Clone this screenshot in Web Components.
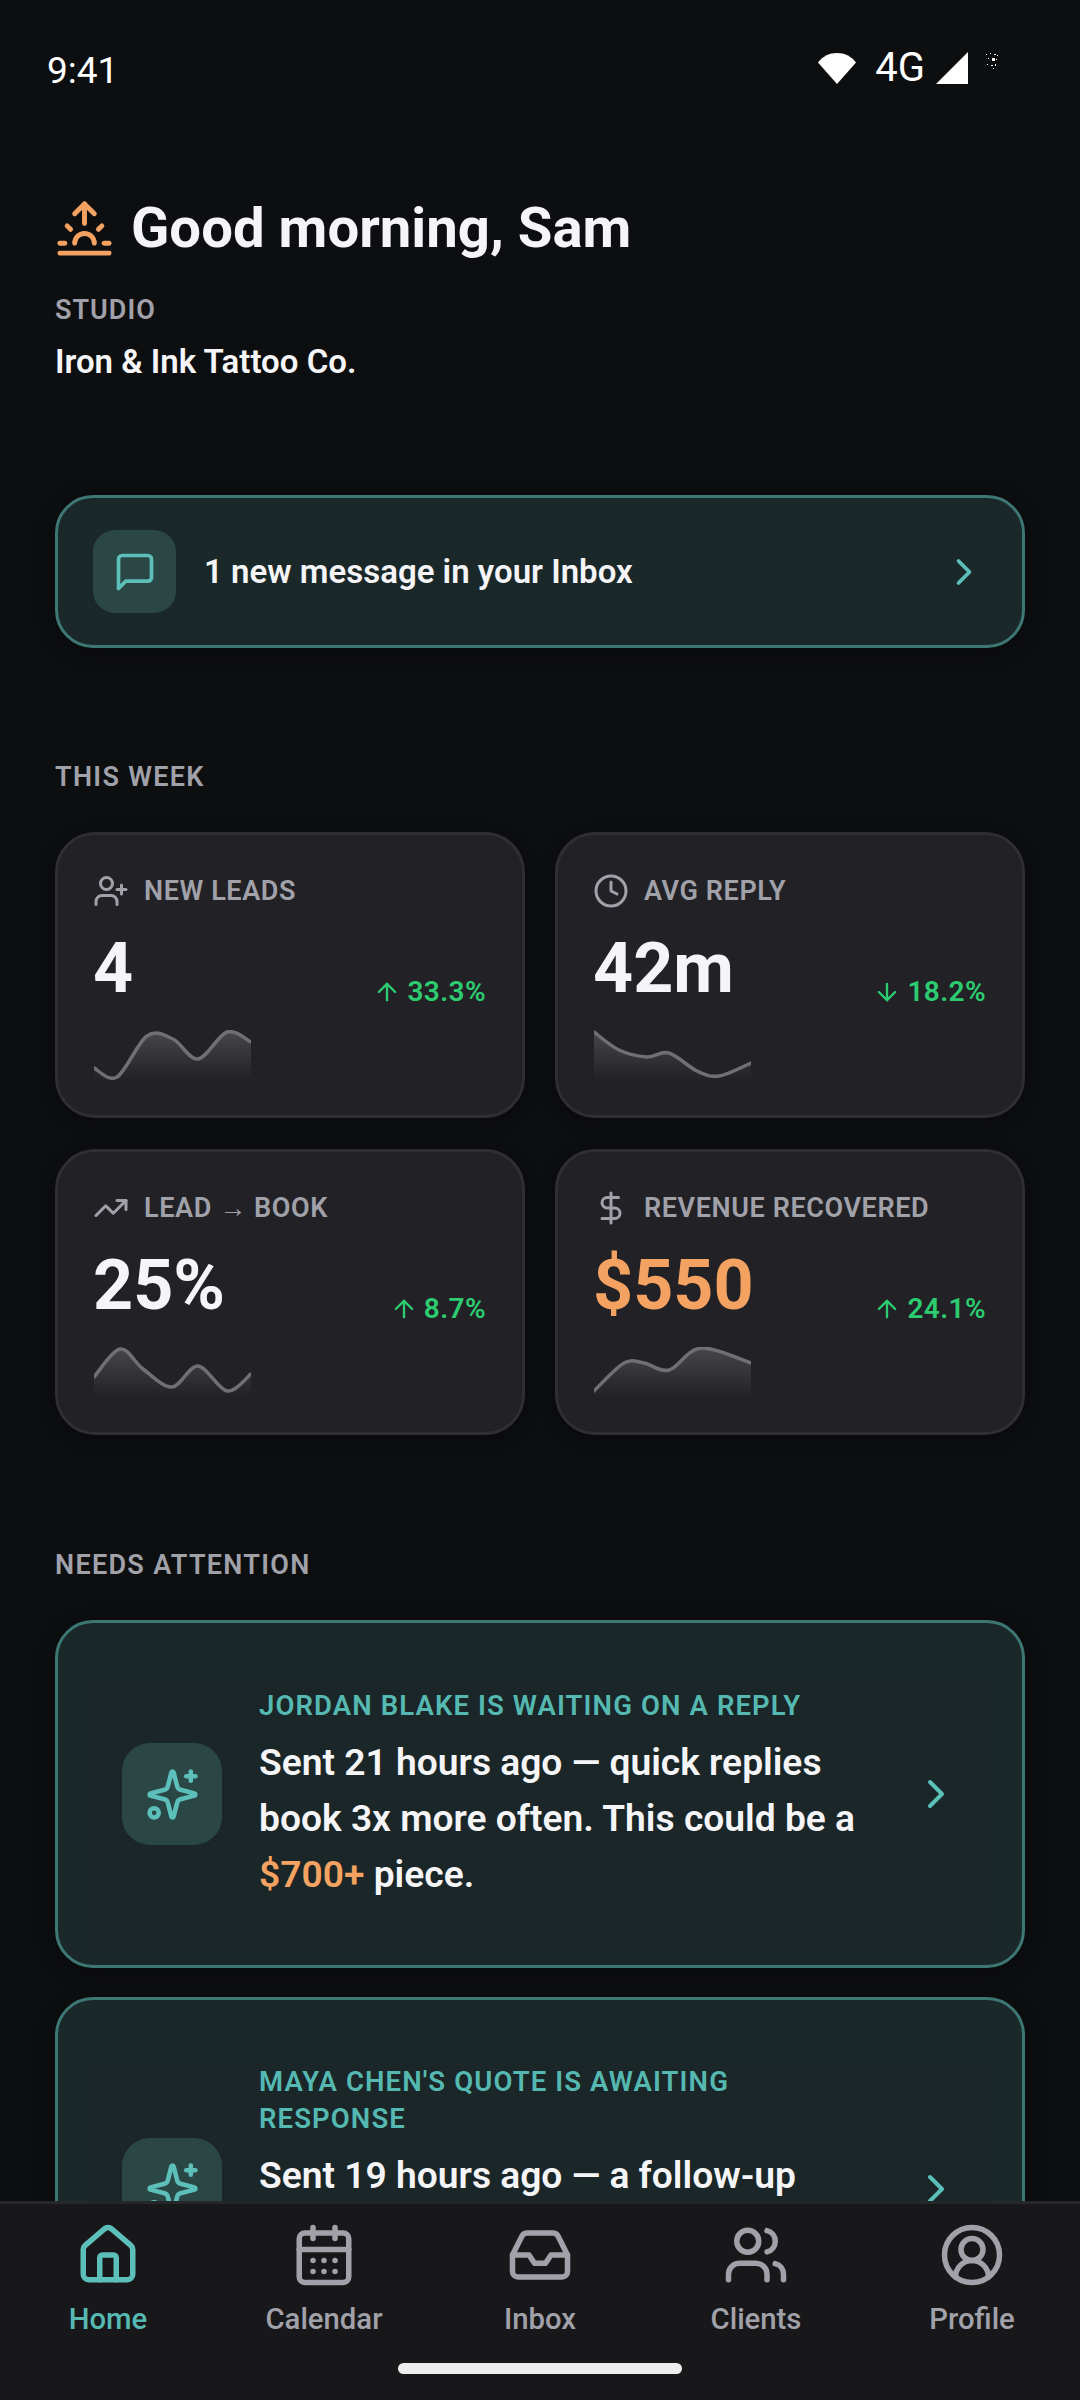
<!DOCTYPE html>
<html>
<head>
<meta charset="utf-8">
<title>Home</title>
<style>
  html, body { margin: 0; padding: 0; background: #0d0e10; }
  body { font-family: Roboto, "Noto Sans", sans-serif; color: #f5f5f7; }
</style>
</head>
<body>
<app-screen>
  <status-bar></status-bar>
  <greeting-head name="Good morning, Sam" label="STUDIO" studio="Iron &amp; Ink Tattoo Co."></greeting-head>
  <inbox-banner>1 new message in your Inbox</inbox-banner>
  <section-label style="margin-top:113px">THIS WEEK</section-label>
  <stat-grid>
    <stat-card icon="userPlus" label="NEW LEADS" value="4" delta="33.3%" dir="up" points="0,38 23,47 53,6 79,9 104,29 133,2 157,12"></stat-card>
    <stat-card icon="clock" label="AVG REPLY" value="42m" delta="18.2%" dir="down" points="0,2 25,20 53,27 75,23 103,41 125,46 157,33"></stat-card>
    <stat-card icon="trend" label="LEAD → BOOK" value="25%" delta="8.7%" dir="up" points="0,30 26,2 49,22 78,40 104,19 133,44 157,27"></stat-card>
    <stat-card icon="dollar" label="REVENUE RECOVERED" value="$550" delta="24.1%" dir="up" accent points="0,44 30,16 50,16 75,23 107,1 157,16"></stat-card>
  </stat-grid>
  <section-label style="margin-top:114px;margin-bottom:38.500px">NEEDS ATTENTION</section-label>
  <alert-card title="JORDAN BLAKE IS WAITING ON A REPLY">Sent 21 hours ago — quick replies book 3x more often. This could be a <b>$700+</b> piece.</alert-card>
  <alert-card title="MAYA CHEN'S QUOTE IS AWAITING RESPONSE" style="margin-top:29px" top="61" pad="2" lines="3">Sent 19 hours ago — a follow-up</alert-card>
  <bottom-nav slot="nav">
    <nav-item icon="home" active>Home</nav-item>
    <nav-item icon="calendar">Calendar</nav-item>
    <nav-item icon="inbox">Inbox</nav-item>
    <nav-item icon="users">Clients</nav-item>
    <nav-item icon="profile">Profile</nav-item>
  </bottom-nav>
</app-screen>

<script>
// lucide style outlines, 24x24 viewbox
const ICONS = {
  sunrise: '<path d="M12 2v8"/><path d="m4.93 10.93 1.41 1.41"/><path d="M2 18h2"/><path d="M20 18h2"/><path d="m19.07 10.93-1.41 1.41"/><path d="M22 22H2"/><path d="m8 6 4-4 4 4"/><path d="M16 18a4 4 0 0 0-8 0"/>',
  message: '<path d="M21 15a2 2 0 0 1-2 2H7l-4 4V5a2 2 0 0 1 2-2h14a2 2 0 0 1 2 2z"/>',
  chevron: '<path d="m9 18 6-6-6-6"/>',
  userPlus: '<path d="M16 21v-2a4 4 0 0 0-4-4H6a4 4 0 0 0-4 4v2"/><circle cx="9" cy="7" r="4"/><path d="M19 8v6"/><path d="M22 11h-6"/>',
  clock: '<circle cx="12" cy="12" r="10"/><path d="M12 6v6l4 2"/>',
  trend: '<path d="M22 7 13.5 15.5 8.5 10.5 2 17"/><path d="M16 7h6v6"/>',
  dollar: '<path d="M12 2v20"/><path d="M17 5H9.5a3.5 3.5 0 0 0 0 7h5a3.5 3.5 0 0 1 0 7H6"/>',
  up: '<path d="m5 12 7-7 7 7"/><path d="M12 19V5"/>',
  down: '<path d="M12 5v14"/><path d="m19 12-7 7-7-7"/>',
  sparkles: '<path d="M9.937 15.5A2 2 0 0 0 8.5 14.063l-6.135-1.582a.5.5 0 0 1 0-.962L8.5 9.936A2 2 0 0 0 9.937 8.5l1.582-6.135a.5.5 0 0 1 .963 0L14.063 8.5A2 2 0 0 0 15.5 9.937l6.135 1.581a.5.5 0 0 1 0 .964L15.5 14.063a2 2 0 0 0-1.437 1.437l-1.582 6.135a.5.5 0 0 1-.963 0z"/><path d="M20 2v4"/><path d="M22 4h-4"/><circle cx="4" cy="20" r="2"/>',
  home: '<path d="M15 21v-8a1 1 0 0 0-1-1h-4a1 1 0 0 0-1 1v8"/><path d="M3 10a2 2 0 0 1 .709-1.528l7-5.999a2 2 0 0 1 2.582 0l7 5.999A2 2 0 0 1 21 10v9a2 2 0 0 1-2 2H5a2 2 0 0 1-2-2z"/>',
  calendar: '<path d="M8 2v4"/><path d="M16 2v4"/><rect x="3" y="4" width="18" height="18" rx="2"/><path d="M3 10h18"/><path d="M8 14h.01"/><path d="M12 14h.01"/><path d="M16 14h.01"/><path d="M8 18h.01"/><path d="M12 18h.01"/><path d="M16 18h.01"/>',
  inbox: '<path d="M22 12h-6l-2 3h-4l-2-3H2"/><path d="M5.45 5.11 2 12v6a2 2 0 0 0 2 2h16a2 2 0 0 0 2-2v-6l-3.45-6.89A2 2 0 0 0 16.76 4H7.24a2 2 0 0 0-1.79 1.11z"/>',
  users: '<path d="M16 21v-2a4 4 0 0 0-4-4H6a4 4 0 0 0-4 4v2"/><circle cx="9" cy="7" r="4"/><path d="M22 21v-2a4 4 0 0 0-3-3.87"/><path d="M16 3.13a4 4 0 0 1 0 7.75"/>',
  profile: '<circle cx="12" cy="12" r="10"/><circle cx="12" cy="10" r="4"/><path d="M18 20a6 6 0 0 0-12 0"/>'
};

class UiIcon extends HTMLElement {
  connectedCallback() {
    const size = this.getAttribute('size') || 24;
    const root = this.attachShadow({ mode: 'open' });
    root.innerHTML = `
      <style>
        :host { display: inline-flex; flex: none; width: ${size}px; height: ${size}px; }
        svg { width: 100%; height: 100%; display: block; }
      </style>
      <svg viewBox="0 0 24 24" fill="none" stroke="currentColor" stroke-width="2" stroke-linecap="round" stroke-linejoin="round">${ICONS[this.getAttribute('name')]}</svg>`;
  }
}
customElements.define('ui-icon', UiIcon);

class AppScreen extends HTMLElement {
  constructor() {
    super();
    this.attachShadow({ mode: 'open' }).innerHTML = `
      <style>
        :host { display: flex; flex-direction: column; width: 1080px; height: 2400px; overflow: hidden; background: #0d0e10; }
        .scroll { flex: 1; min-height: 0; overflow: hidden; padding: 0 55px; display: flex; flex-direction: column; }
        ::slotted(*) { flex: none; }
      </style>
      <slot name="status"></slot>
      <div class="scroll"><slot></slot></div>
      <slot name="nav"></slot>`;
  }
  connectedCallback() {
    // status bar sits above the padded scroll area
    const bar = this.querySelector('status-bar');
    if (bar) bar.slot = 'status';
  }
}
customElements.define('app-screen', AppScreen);

class StatusBar extends HTMLElement {
  constructor() {
    super();
    this.attachShadow({ mode: 'open' }).innerHTML = `
      <style>
        :host { display: flex; height: 110px; padding: 48px 82px 0 47px; box-sizing: border-box; justify-content: space-between; align-items: flex-start; color: #fff; font-size: 37px; line-height: 46px; }
        .right { display: flex; align-items: center; height: 40px; font-size: 40px; }
        .wifi { width: 40px; height: 32px; margin-right: 18px; }
        .sig { width: 32px; height: 32px; margin: 0 18px 0 11px; }
        .spk { width: 12px; height: 16px; margin-top: -14px; }
      </style>
      <span>9:41</span>
      <div class="right">
        <svg class="wifi" viewBox="0 0 40 32"><path d="M20 32 1 10.5C6 4 12.500 1 20 1s14 3 19 9.500z" fill="#fff"/></svg>
        <span>4G</span>
        <svg class="sig" viewBox="0 0 32 32"><path d="M32 0v32H0z" fill="#fff"/></svg>
        <svg class="spk" viewBox="0 0 12 16" fill="#fff"><rect x="0" y="1" width="1" height="1"/><rect x="4" y="0" width="1" height="1"/><rect x="8" y="1" width="2" height="1"/><rect x="11" y="2" width="1" height="1"/><rect x="2" y="5" width="1" height="1"/><rect x="6" y="5" width="3" height="3"/><rect x="10" y="6" width="1" height="1"/><rect x="1" y="11" width="1" height="1"/><rect x="5" y="12" width="2" height="1"/><rect x="9" y="11" width="1" height="2"/><rect x="7" y="15" width="1" height="1"/></svg>
      </div>`;
  }
}
customElements.define('status-bar', StatusBar);

class GreetingHead extends HTMLElement {
  connectedCallback() {
    const root = this.attachShadow({ mode: 'open' });
    root.innerHTML = `
      <style>
        :host { display: block; margin-top: 86px; }
        .row { display: flex; align-items: center; gap: 17px; height: 64px; color: #f4a261; }
        h1 { margin: 0; font: 700 56.300px/64px Roboto, sans-serif; color: #f5f5f7; }
        .lbl { margin-top: 34px; font: 600 27px/32px Roboto, sans-serif; letter-spacing: 1px; color: #a1a1aa; }
        .name { margin-top: 14px; font: 600 33px/44px Roboto, sans-serif; color: #f5f5f7; }
      </style>
      <div class="row"><ui-icon name="sunrise" size="59"></ui-icon><h1>${this.getAttribute('name')}</h1></div>
      <div class="lbl">${this.getAttribute('label')}</div>
      <div class="name">${this.getAttribute('studio').replace('&', '&amp;')}</div>`;
  }
}
customElements.define('greeting-head', GreetingHead);

class InboxBanner extends HTMLElement {
  constructor() {
    super();
    this.attachShadow({ mode: 'open' }).innerHTML = `
      <style>
        :host { display: flex; align-items: center; margin-top: 111px; padding: 32px 36px 32px 35px; border: 3px solid #3d7774; border-radius: 38px; background: #1b2829; box-shadow: 0 4px 20px rgba(0,0,0,.3); font: 600 33px/44px Roboto, sans-serif; color: #f5f5f7; }
        .tile { width: 83px; height: 83px; border-radius: 22px; background: #2a4746; color: #5cbfb9; display: flex; align-items: center; justify-content: center; margin-right: 28px; flex: none; }
        .txt { flex: 1; }
        .chev { color: #5cbfb9; }
      </style>
      <div class="tile"><ui-icon name="message" size="44"></ui-icon></div>
      <div class="txt"><slot></slot></div>
      <ui-icon class="chev" name="chevron" size="44"></ui-icon>`;
  }
}
customElements.define('inbox-banner', InboxBanner);

class SectionLabel extends HTMLElement {
  constructor() {
    super();
    this.attachShadow({ mode: 'open' }).innerHTML = `
      <style>
        :host { display: block; font: 600 27px/32px Roboto, sans-serif; letter-spacing: 1.300px; color: #a1a1aa; margin-bottom: 39px; }
      </style>
      <slot></slot>`;
  }
}
customElements.define('section-label', SectionLabel);

class StatGrid extends HTMLElement {
  constructor() {
    super();
    this.attachShadow({ mode: 'open' }).innerHTML = `
      <style>
        :host { display: grid; grid-template-columns: 1fr 1fr; gap: 31px 30px; }
      </style>
      <slot></slot>`;
  }
}
customElements.define('stat-grid', StatGrid);

class SparkLine extends HTMLElement {
  connectedCallback() {
    const pts = this.getAttribute('points').split(' ').map(p => p.split(',').map(Number));
    // smooth the points into a catmull-rom curve
    let d = `M${pts[0][0]} ${pts[0][1]}`;
    for (let i = 0; i < pts.length - 1; i++) {
      const p0 = pts[i - 1] || pts[i], p1 = pts[i], p2 = pts[i + 1], p3 = pts[i + 2] || p2;
      const c1x = p1[0] + (p2[0] - p0[0]) / 6, c1y = p1[1] + (p2[1] - p0[1]) / 6;
      const c2x = p2[0] - (p3[0] - p1[0]) / 6, c2y = p2[1] - (p3[1] - p1[1]) / 6;
      d += ` C${c1x} ${c1y} ${c2x} ${c2y} ${p2[0]} ${p2[1]}`;
    }
    const id = 'g' + Math.random().toString(36).slice(2);
    this.attachShadow({ mode: 'open' }).innerHTML = `
      <style>
        :host { display: block; width: 157px; height: 50px; }
        svg { display: block; overflow: hidden; }
      </style>
      <svg width="157" height="50" viewBox="0 0 157 50">
        <defs><linearGradient id="${id}" x1="0" y1="0" x2="0" y2="1"><stop offset="0" stop-color="#fff" stop-opacity=".17"/><stop offset="1" stop-color="#fff" stop-opacity="0"/></linearGradient></defs>
        <path d="${d} L157 50 L0 50 Z" fill="url(#${id})"/>
        <path d="${d}" fill="none" stroke="#707074" stroke-width="3.500" stroke-linecap="round"/>
      </svg>`;
  }
}
customElements.define('spark-line', SparkLine);

class StatCard extends HTMLElement {
  connectedCallback() {
    const a = n => this.getAttribute(n);
    this.attachShadow({ mode: 'open' }).innerHTML = `
      <style>
        :host { display: block; box-sizing: border-box; height: 286px; padding: 38px 36px 0 35px; border: 3px solid #2e2e33; border-radius: 40px; background: #212126; box-shadow: 0 4px 16px rgba(0,0,0,.3); }
        .top { display: flex; align-items: center; gap: 15px; height: 36px; color: #a1a1aa; font: 600 27px/36px Roboto, sans-serif; letter-spacing: .6px; white-space: nowrap; }
        .row { display: flex; justify-content: space-between; align-items: flex-end; margin-top: 19px; }
        .val { font: 700 70px/80px Roboto, sans-serif; color: ${this.hasAttribute('accent') ? '#f4a261' : '#f5f5f7'}; }
        .delta { display: flex; align-items: center; gap: 6px; font: 600 28px/32px Roboto, sans-serif; color: #2ecc71; letter-spacing: .4px; }
        spark-line { margin-top: 22px; margin-left: 1px; }
      </style>
      <div class="top"><ui-icon name="${a('icon')}" size="36"></ui-icon><span>${a('label')}</span></div>
      <div class="row"><div class="val">${a('value')}</div><div class="delta"><ui-icon name="${a('dir')}" size="28"></ui-icon><span>${a('delta')}</span></div></div>
      <spark-line points="${a('points')}"></spark-line>`;
  }
}
customElements.define('stat-card', StatCard);

class AlertCard extends HTMLElement {
  connectedCallback() {
    const top = this.getAttribute('top') || 58;
    const pad = this.getAttribute('pad') || 6;
    // a card cut by the nav keeps the height of its full text
    const lines = this.getAttribute('lines') || 1;
    this.attachShadow({ mode: 'open' }).innerHTML = `
      <style>
        :host { display: block; box-sizing: border-box; padding: ${top}px 31px 10px; border: 3px solid #3d7774; border-radius: 38px; background: #1b2829; box-shadow: 0 4px 20px rgba(0,0,0,.3); }
        .in { display: flex; align-items: center; gap: 37px; padding: ${pad}px 31px 53px 33px; background: #1a2628; }
        .tile { width: 100px; height: 102px; border-radius: 28px; background: #2a4746; color: #5cbfb9; display: flex; align-items: center; justify-content: center; flex: none; }
        .col { flex: 1; min-width: 0; }
        .ttl { font: 600 27.500px/37px Roboto, sans-serif; letter-spacing: 1.100px; color: #55b9b2; }
        .body { margin-top: 10px; min-height: ${lines * 56}px; font: 600 37.200px/56px Roboto, sans-serif; color: #f5f5f7; }
        ::slotted(b) { font-weight: 600; color: #f4a261; }
        .chev { color: #5cbfb9; }
      </style>
      <div class="in">
        <div class="tile"><ui-icon name="sparkles" size="55"></ui-icon></div>
        <div class="col"><div class="ttl">${this.getAttribute('title')}</div><div class="body"><slot></slot></div></div>
        <ui-icon class="chev" name="chevron" size="48"></ui-icon>
      </div>`;
  }
}
customElements.define('alert-card', AlertCard);

class BottomNav extends HTMLElement {
  constructor() {
    super();
    this.attachShadow({ mode: 'open' }).innerHTML = `
      <style>
        :host { display: block; position: relative; box-sizing: border-box; height: 199px; border-top: 3px solid #26272a; background: #18181b; }
        .items { display: grid; grid-template-columns: repeat(5, 1fr); padding-top: 18px; }
        .bar { width: 284px; height: 11px; border-radius: 6px; background: #eee; position: absolute; left: 398px; top: 159px; }
      </style>
      <div class="items"><slot></slot></div>
      <div class="bar"></div>`;
  }
}
customElements.define('bottom-nav', BottomNav);

class NavItem extends HTMLElement {
  connectedCallback() {
    const active = this.hasAttribute('active');
    this.attachShadow({ mode: 'open' }).innerHTML = `
      <style>
        :host { display: flex; flex-direction: column; align-items: center; color: ${active ? '#55b9b2' : '#a1a1aa'}; font: 500 29.300px/36px Roboto, sans-serif; }
        .lbl { margin-top: 13px; }
        ui-icon { color: ${active ? '#5cbfb9' : '#a1a1aa'}; }
      </style>
      <ui-icon name="${this.getAttribute('icon')}" size="66"></ui-icon>
      <div class="lbl"><slot></slot></div>`;
  }
}
customElements.define('nav-item', NavItem);
</script>
</body>
</html>
